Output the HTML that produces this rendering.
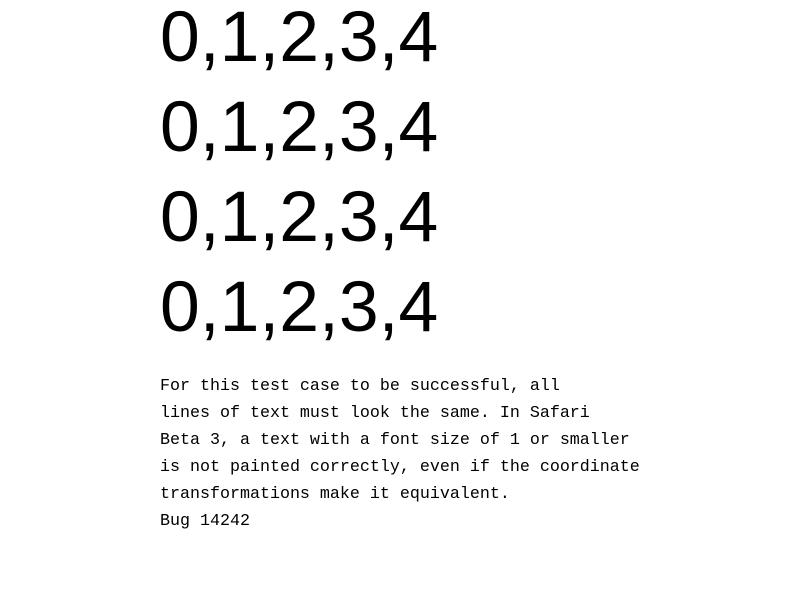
<!DOCTYPE html>
<html><head><style>
body{margin:0;background:#fff;width:800px;height:600px;overflow:hidden;position:relative}
.big{position:absolute;left:160px;font:71.5px/90px "Liberation Sans",sans-serif;color:#000;white-space:nowrap}
.txt{position:absolute;left:160px;top:373px;font:16.67px/27px "Liberation Mono",monospace;color:#000;white-space:pre}
</style></head><body>
<div class="big" style="top:-8px">0,1,2,3,4</div>
<div class="big" style="top:82px">0,1,2,3,4</div>
<div class="big" style="top:172px">0,1,2,3,4</div>
<div class="big" style="top:262px">0,1,2,3,4</div>
<div class="txt">For this test case to be successful, all
lines of text must look the same. In Safari
Beta 3, a text with a font size of 1 or smaller
is not painted correctly, even if the coordinate
transformations make it equivalent.
Bug 14242</div>
</body></html>
